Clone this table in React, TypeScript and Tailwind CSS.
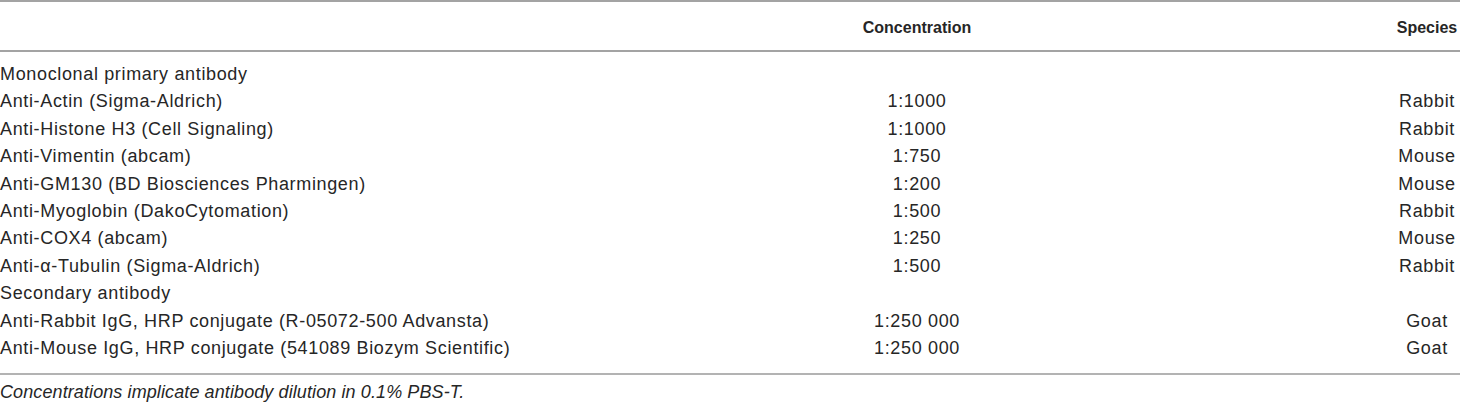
const rows: { name: string; conc?: string; species?: string }[] = [
  { name: 'Monoclonal primary antibody' },
  { name: 'Anti-Actin (Sigma-Aldrich)', conc: '1:1000', species: 'Rabbit' },
  { name: 'Anti-Histone H3 (Cell Signaling)', conc: '1:1000', species: 'Rabbit' },
  { name: 'Anti-Vimentin (abcam)', conc: '1:750', species: 'Mouse' },
  { name: 'Anti-GM130 (BD Biosciences Pharmingen)', conc: '1:200', species: 'Mouse' },
  { name: 'Anti-Myoglobin (DakoCytomation)', conc: '1:500', species: 'Rabbit' },
  { name: 'Anti-COX4 (abcam)', conc: '1:250', species: 'Mouse' },
  { name: 'Anti-α-Tubulin (Sigma-Aldrich)', conc: '1:500', species: 'Rabbit' },
  { name: 'Secondary antibody' },
  { name: 'Anti-Rabbit IgG, HRP conjugate (R-05072-500 Advansta)', conc: '1:250 000', species: 'Goat' },
  { name: 'Anti-Mouse IgG, HRP conjugate (541089 Biozym Scientific)', conc: '1:250 000', species: 'Goat' },
]

export default function App() {
  return (
    <div className="w-[1460px] h-[405px] bg-white text-[#262626] font-['Liberation_Sans',Arial,sans-serif] overflow-hidden">
      {/* Header */}
      <div className="border-t-[2px] border-b-[2px] border-[#a3a3a3] h-[52px] grid grid-cols-[440px_954px_66px] items-center">
        <div />
        <div className="text-center font-bold text-[16px] pt-[4px]">Concentration</div>
        <div className="text-center font-bold text-[16px] pt-[4px]">Species</div>
      </div>

      {/* Body */}
      <div className="pt-[9px] pb-[11px] border-b-[2px] border-[#b3b3b3]">
        {rows.map((r) => (
          <div key={r.name} className="grid grid-cols-[440px_954px_66px] h-[27.4px] items-center text-[18px] tracking-[0.65px] leading-[27.4px]">
            <div className="whitespace-nowrap">{r.name}</div>
            <div className="text-center">{r.conc}</div>
            <div className="text-center whitespace-nowrap">{r.species}</div>
          </div>
        ))}
      </div>

      <div className="italic text-[18px] tracking-[0.1px] pt-[4px]">
        Concentrations implicate antibody dilution in 0.1% PBS-T.
      </div>
    </div>
  )
}
